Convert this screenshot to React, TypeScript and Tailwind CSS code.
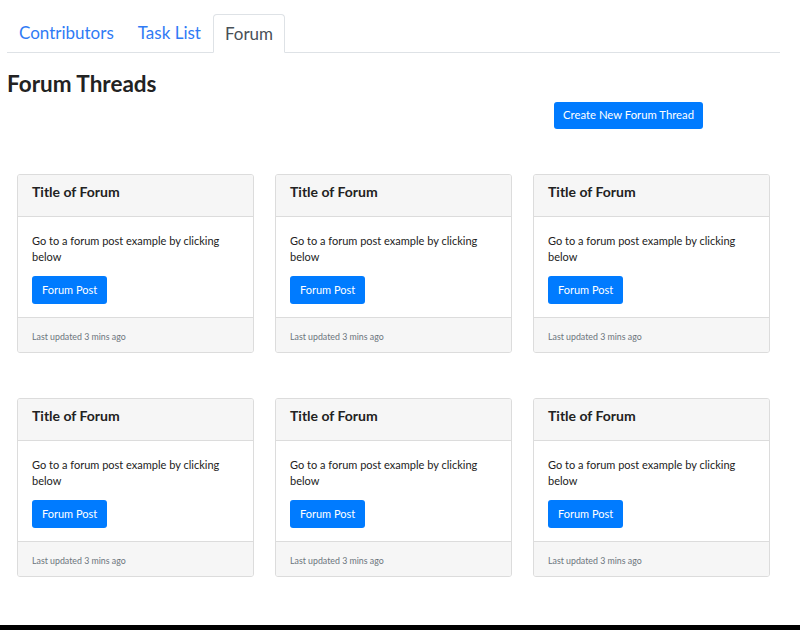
const cards = Array.from({ length: 6 }, (_, i) => ({
  id: i,
  title: "Title of Forum",
  text: "Go to a forum post example by clicking below",
  updated: "Last updated 3 mins ago",
}));

function ForumCard({ title, text, updated }: { title: string; text: string; updated: string }) {
  return (
    <div className="flex flex-col rounded-[3px] border border-[#dcdcdc] bg-white overflow-hidden">
      <div className="h-[42px] bg-[#f6f6f6] border-b border-[#dcdcdc] px-[14px] pt-[8px]">
        <h5 className="text-[14px] font-bold text-[#222] leading-[18px]">{title}</h5>
      </div>
      <div className="px-[14px] pt-[16px] pb-[13px]">
        <p className="text-[11px] leading-[16px] text-[#222]">{text}</p>
        <button className="mt-[11px] h-[28px] px-[10px] rounded-[3px] bg-[#007bff] text-white text-[11px]">
          Forum Post
        </button>
      </div>
      <div className="h-[35px] bg-[#f6f6f6] border-t border-[#dcdcdc] px-[14px] pt-[13px]">
        <small className="block text-[8.8px] leading-[12px] text-[#6c757d]">{updated}</small>
      </div>
    </div>
  );
}

export default function App() {
  return (
    <div className="h-[630px] bg-black" style={{ fontFamily: "Lato, 'Noto Sans', sans-serif" }}>
      <div className="h-[625px] bg-white pl-[7px] pr-[20px] pt-[14px]">
        <ul className="flex border-b border-[#dee2e6]">
          <li className="px-[11px] h-[38px] flex items-center text-[17px] text-[#2f7bf5] border border-transparent">
            Contributors
          </li>
          <li className="px-[11px] h-[38px] flex items-center text-[17px] text-[#2f7bf5] border border-transparent">
            Task List
          </li>
          <li className="-mb-px px-[11px] h-[39px] flex items-center text-[17px] text-[#495057] bg-white border border-[#dee2e6] border-b-white rounded-t-[4px]">
            Forum
          </li>
        </ul>
        <h2 className="mt-[17px] text-[22.5px] font-bold leading-[28px] text-[#222]">Forum Threads</h2>
        <div className="mt-[4px] flex justify-end pr-[77px]">
          <button className="h-[27px] px-[9px] rounded-[3px] bg-[#007bff] text-white text-[11.3px]">
            Create New Forum Thread
          </button>
        </div>
        <div className="mt-[45px] mx-[10px] grid grid-cols-3 gap-x-[21px] gap-y-[45px]">
          {cards.map((c) => (
            <ForumCard key={c.id} title={c.title} text={c.text} updated={c.updated} />
          ))}
        </div>
      </div>
    </div>
  );
}
